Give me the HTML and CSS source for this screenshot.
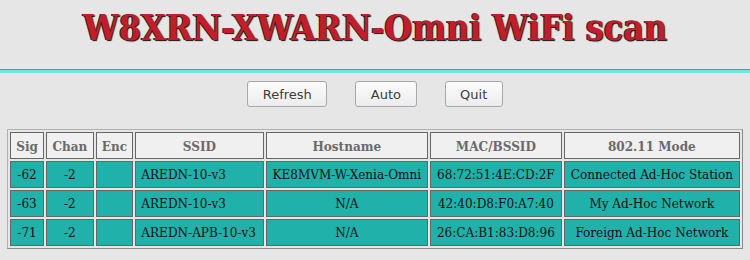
FILE: index.html
```html
<!DOCTYPE HTML>
<html>
<head>
    <meta name="viewport" content="width=device-width, initial-scale=1.0">
    <link rel="stylesheet" href="styles.css">
</head>
<body>
    <h1 class="title">W8XRN-XWARN-Omni WiFi scan</h1>
    <hr class="rule">
    <div class="buttons">
        <button class="btn">Refresh</button>
        <button class="btn">Auto</button>
        <button class="btn">Quit</button>
    </div>
    <table class="scan">
        <tr>
            <th>Sig</th>
            <th>Chan</th>
            <th>Enc</th>
            <th>SSID</th>
            <th>Hostname</th>
            <th>MAC/BSSID</th>
            <th>802.11 Mode</th>
        </tr>
        <tr>
            <td class="mid">-62</td>
            <td class="mid">-2</td>
            <td></td>
            <td>AREDN-10-v3</td>
            <td class="mid">KE8MVM-W-Xenia-Omni</td>
            <td class="mid">68:72:51:4E:CD:2F</td>
            <td class="mid">Connected Ad-Hoc Station</td>
        </tr>
        <tr>
            <td class="mid">-63</td>
            <td class="mid">-2</td>
            <td></td>
            <td>AREDN-10-v3</td>
            <td class="mid">N/A</td>
            <td class="mid">42:40:D8:F0:A7:40</td>
            <td class="mid">My Ad-Hoc Network</td>
        </tr>
        <tr>
            <td class="mid">-71</td>
            <td class="mid">-2</td>
            <td></td>
            <td>AREDN-APB-10-v3</td>
            <td class="mid">N/A</td>
            <td class="mid">26:CA:B1:83:D8:96</td>
            <td class="mid">Foreign Ad-Hoc Network</td>
        </tr>
    </table>
</body>
</html>
```

FILE: styles.css
```css
body {
    margin: 0;
    padding: 0 8px;
    background-color: #e6e6e6;
    font-family: "DejaVu Serif", serif;
    font-stretch: condensed;
}
.title {
    margin: 0;
    padding-top: 7px;
    height: 62px;
    text-align: center;
    font-size: 35.5px;
    font-weight: bold;
    color: #c11d2b;
    text-shadow: 1px 1px 1px #111, -1px 0 0 #333;
}
.rule {
    margin: 0 -8px;
    height: 3px;
    border: 0;
    border-top: 1px solid #5f9a9a;
    background-color: #6de5e5;
}
.buttons {
    display: flex;
    justify-content: center;
    gap: 28px;
    padding: 8px 0 22px;
}
.btn {
    height: 26px;
    padding: 0 14.5px;
    font-family: "DejaVu Sans", sans-serif;
    font-size: 13px;
    color: #3c3c3c;
    background: linear-gradient(#fcfcfc, #ececec);
    border: 1px solid #a8a8a8;
    border-radius: 3px;
}
.scan {
    width: 736px;
    margin-left: -1px;
    border: 1px solid #8a8a8a;
    border-top-color: #b0b0b0;
    border-left-color: #b0b0b0;
    border-spacing: 2px;
    font-size: 13.4px;
    white-space: nowrap;
}
.scan th {
    height: 25px;
    padding: 0 5px;
    background-color: #f0f0f0;
    color: #6a6a6a;
    border: 1px solid #666;
}
.scan td {
    height: 25px;
    padding: 0 5px;
    background-color: #20b2aa;
    color: #111;
    border: 1px solid #666;
}
.scan .mid {
    text-align: center;
}
```
